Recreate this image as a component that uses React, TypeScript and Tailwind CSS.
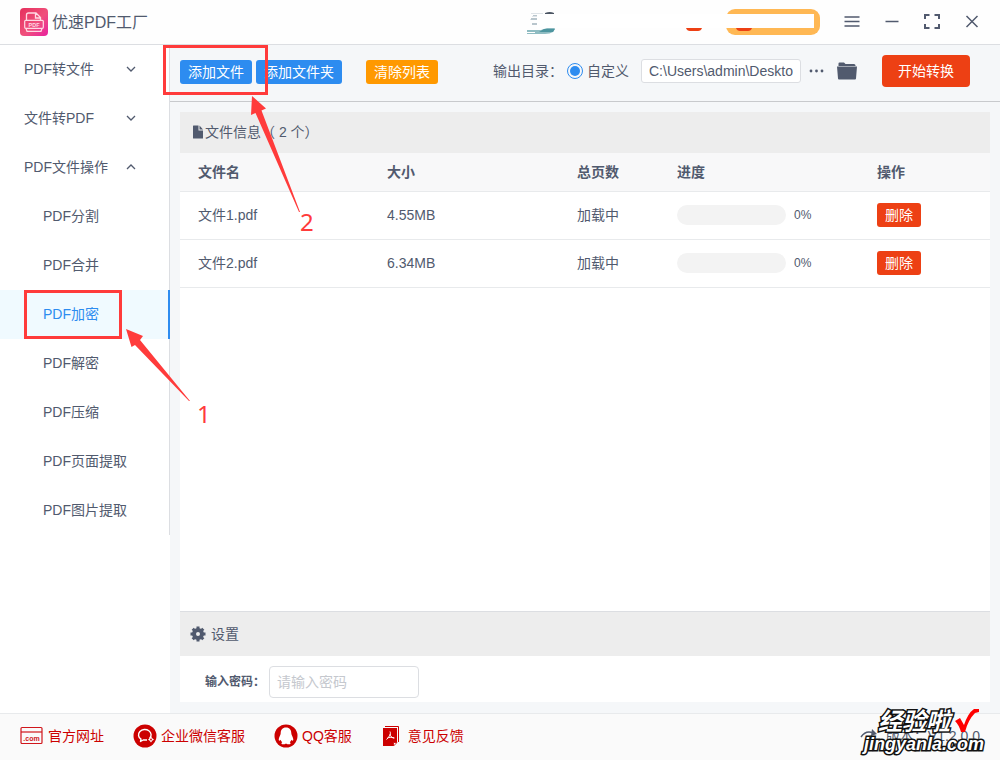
import { useState } from "react";

const operations = [
  "PDF分割",
  "PDF合并",
  "PDF加密",
  "PDF解密",
  "PDF压缩",
  "PDF页面提取",
  "PDF图片提取",
];

const files = [
  { name: "文件1.pdf", size: "4.55MB", pages: "加载中", progress: 0 },
  { name: "文件2.pdf", size: "6.34MB", pages: "加载中", progress: 0 },
];

const Logo = () => (
  <svg width="28" height="28" viewBox="0 0 28 28" fill="none">
    <defs>
      <linearGradient id="logo" x1="0" y1="0" x2="1" y2="1">
        <stop offset="0" stopColor="#e52f5c" />
        <stop offset="0.55" stopColor="#f0507c" />
        <stop offset="1" stopColor="#e8219f" />
      </linearGradient>
    </defs>
    <rect width="28" height="28" rx="4" fill="url(#logo)" />
    <path d="M6.500 12V7Q6.500 5 8.500 5H16L20.500 9.500V12M15.500 5V10H20.500" stroke="#ffd9e4" strokeWidth="1.300" />
    <rect x="4.700" y="12.300" width="18.600" height="8" rx="1" stroke="#ffd9e4" strokeWidth="1.200" />
    <path d="M6 20.500L7 23.300H21L22 20.500" stroke="#ffd9e4" strokeWidth="1.200" />
    <text x="14" y="18.600" fontSize="5.500" fontWeight="700" textAnchor="middle" fill="#ffd9e4">
      PDF
    </text>
  </svg>
);

const Banner = () => (
  <svg width="293" height="28" viewBox="0 0 293 28">
    <path d="M4 5H16V6H4ZM5 8H10V9H5ZM3 11H10V12H3Z" fill="#dfe4e8" />
    <path d="M18 5Q23 3 27 5V7H18Z" fill="#4b5563" />
    <path d="M6 7H10V8H6ZM4 10H10V12H4ZM5 15H10V17H5Z" fill="#b9c6cd" />
    <path d="M0 22H14L20 20H28L26 24Q23 26 18 26H0V25H8V24H0Z" fill="#8fbcc2" />
    <path d="M17 21H28L26 24H12Z" fill="#4d959f" />
    <path d="M159 20H175Q174 23 171 23H163Q160 23 159 20Z" fill="#ed4014" />
    <rect x="199" y="1" width="94" height="26" rx="9" fill="#ffb854" />
    <path d="M209 20H225Q224 23 221 23H213Q210 23 209 20Z" fill="#ed4014" />
    <rect x="10" y="6" width="277" height="14" fill="#fff" />
  </svg>
);

const Chevron = ({ up = false }: { up?: boolean }) => (
  <svg width="10" height="10" viewBox="0 0 10 10" fill="none" stroke="#515a6e" strokeWidth="1.300">
    <path d={up ? "M1 7L5 3L9 7" : "M1 3L5 7L9 3"} />
  </svg>
);

const WebIcon = () => (
  <svg width="24" height="24" viewBox="0 0 24 24" fill="none" stroke="#d0161b">
    <rect x="1" y="3.500" width="21" height="16" rx="1" strokeWidth="1.200" />
    <path d="M1 8H22" strokeWidth="1.200" />
    <text x="11.500" y="17" fontSize="7" fontWeight="700" textAnchor="middle" fill="#d0161b" stroke="none">
      .com
    </text>
  </svg>
);

const WechatIcon = () => (
  <svg width="24" height="24" viewBox="0 0 24 24" fill="none">
    <circle cx="12" cy="12" r="11.500" fill="#cc0000" />
    <path
      d="M16.500 14.500A6.300 5.400 0 1 0 8 15.200L7.500 17.500L10.200 16H14"
      stroke="#fff"
      strokeWidth="1.400"
      strokeLinejoin="round"
    />
    <path d="M18 12.500L19.200 14.200L21 15.500L19.200 16.700L18 18.500L16.700 16.700L15 15.500L16.700 14.200Z" fill="#fff" />
    <circle cx="18" cy="15.500" r="0.900" fill="#cc0000" />
  </svg>
);

const QQIcon = () => (
  <svg width="24" height="24" viewBox="0 0 24 24">
    <circle cx="12" cy="12" r="11.500" fill="#cc0000" />
    <path
      d="M12 3.500C8.300 3.500 6.700 6 6.700 9.200C6.700 11 4.700 13.300 4.700 15.500C4.700 17 5.700 17 6.700 15.700C7 17 7.700 17.800 8.200 18.200C6.700 19 7.200 20.300 9.500 20.300C11 20.300 11.500 20 12 19.600C12.500 20 13 20.300 14.500 20.300C16.800 20.300 17.300 19 15.800 18.200C16.300 17.800 17 17 17.300 15.700C18.300 17 19.300 17 19.300 15.500C19.300 13.300 17.300 11 17.300 9.200C17.300 6 15.700 3.500 12 3.500Z"
      fill="#fff"
    />
  </svg>
);

const FeedbackIcon = () => (
  <svg width="18" height="24" viewBox="0 0 18 24" fill="none">
    <path d="M3 2.500H16.500V18" stroke="#cc0000" strokeWidth="1" />
    <path d="M1 4H15V18L11 22H1Z" fill="#cc0000" />
    <path d="M11.500 22V18.500H15Z" fill="#fff" stroke="#cc0000" strokeWidth="0.800" />
    <path d="M8 7.500C9 9.500 8 12 4.500 15.500M8 10C8.500 12.500 10 14 12.500 14M5 14.500C7 13 9 13 12 14" stroke="#fff" />
  </svg>
);

const GearIcon = () => (
  <svg width="16" height="16" viewBox="0 0 16 16" fill="none" stroke="#515a6e">
    <circle cx="8" cy="8" r="4" strokeWidth="4" />
    <path
      d="M8 3V0.500M8 13V15.500M3 8H0.500M13 8H15.500M4.500 4.500L2.700 2.700M11.500 4.500L13.300 2.700M4.500 11.500L2.700 13.300M11.500 11.500L13.300 13.300"
      strokeWidth="3"
    />
  </svg>
);

const smallButton = "h-6 rounded-[3px] px-2 text-sm leading-6 text-white";

const App = () => {
  const [active, setActive] = useState<string>("PDF加密");

  return (
    <div className="relative flex min-h-screen flex-col overflow-hidden bg-white font-['Liberation_Sans','Noto_Sans_CJK_SC',sans-serif] text-sm text-[#515a6e]">
      <header className="flex h-[45px] items-center border-b border-[#dcdee2] bg-[#fefefe] pr-5 pl-5">
        <Logo />
        <h1 className="ml-1 pt-0.5 text-base">优速PDF工厂</h1>
        <div className="ml-auto flex items-center">
          <Banner />
          <div className="ml-6 flex items-center gap-6">
            <button aria-label="菜单">
              <svg width="16" height="16" viewBox="0 0 16 16" stroke="#515a6e" strokeWidth="1.500">
                <path d="M0.500 3H15.500M0.500 7.500H15.500M0.500 12H15.500" />
              </svg>
            </button>
            <button aria-label="最小化">
              <svg width="16" height="16" viewBox="0 0 16 16" stroke="#515a6e" strokeWidth="1.500">
                <path d="M1.500 7.500H14.500" />
              </svg>
            </button>
            <button aria-label="最大化">
              <svg width="16" height="16" viewBox="0 0 16 16" fill="none" stroke="#515a6e" strokeWidth="2">
                <path d="M1 5V1H5.500M10.500 1H15V5M15 10V14H10.500M5.500 14H1V10" />
              </svg>
            </button>
            <button aria-label="关闭">
              <svg width="16" height="16" viewBox="0 0 16 16" stroke="#515a6e" strokeWidth="1.500">
                <path d="M2.500 2L13.500 13M13.500 2L2.500 13" />
              </svg>
            </button>
          </div>
        </div>
      </header>

      <div className="flex flex-1">
        <aside className="w-[170px] shrink-0">
          <nav className="border-r border-[#dcdee2]">
            <button className="flex h-[49px] w-full items-center justify-between pr-[33px] pb-0.5 pl-6">
              PDF转文件
              <Chevron />
            </button>
            <button className="flex h-[49px] w-full items-center justify-between pr-[33px] pb-0.5 pl-6">
              文件转PDF
              <Chevron />
            </button>
            <button className="flex h-[49px] w-full items-center justify-between pr-[33px] pb-0.5 pl-6">
              PDF文件操作
              <Chevron up />
            </button>
            {operations.map((item) => (
              <button
                key={item}
                onClick={() => setActive(item)}
                className={
                  item === active
                    ? "-mr-px block h-[49px] w-[170px] border-r-2 border-[#2d8cf0] bg-[#f0faff] pb-0.5 pl-[43px] text-left text-[#2d8cf0]"
                    : "block h-[49px] w-full pb-0.5 pl-[43px] text-left"
                }
              >
                {item}
              </button>
            ))}
          </nav>
        </aside>

        <main className="flex min-w-0 flex-1 flex-col bg-[#f5f7f9]">
          <div className="flex h-[57px] items-center border-b border-[#c8cacd] pr-[30px] pb-1 pl-[10px]">
            <div className="flex pt-0.5">
              <button className={`${smallButton} bg-[#2d8cf0]`}>添加文件</button>
              <button className={`${smallButton} ml-1 bg-[#2d8cf0]`}>添加文件夹</button>
              <button className={`${smallButton} ml-6 bg-[#ff9900]`}>清除列表</button>
            </div>
            <div className="ml-auto flex items-center">
              <span>输出目录：</span>
              <label className="ml-1 flex items-center gap-1">
                <input
                  type="radio"
                  name="output"
                  defaultChecked
                  className="size-4 appearance-none rounded-full border border-[#2d8cf0] bg-white p-[2px] checked:bg-[#2d8cf0] checked:bg-clip-content"
                />
                自定义
              </label>
              <input
                aria-label="输出目录"
                defaultValue="C:\Users\admin\Deskto"
                className="ml-3 h-6 w-40 rounded-[3px] border border-[#dcdee2] bg-white px-[7px]"
              />
              <button aria-label="更多" className="ml-2">
                <svg width="16" height="16" viewBox="0 0 16 16" fill="#515a6e">
                  <circle cx="2" cy="8" r="1.400" />
                  <circle cx="7.500" cy="8" r="1.400" />
                  <circle cx="13" cy="8" r="1.400" />
                </svg>
              </button>
              <button aria-label="打开文件夹" className="ml-3">
                <svg width="20" height="18" viewBox="0 0 20 18" fill="#515a6e">
                  <path d="M1.500 4V1.500Q1.500 0.500 2.500 0.500H7L8.500 2H17Q18.500 2 18.500 3.500V4Z" />
                  <path d="M0 4.500H20L19 16.500Q19 17.500 18 17.500H2Q1 17.500 1 16.500Z" />
                </svg>
              </button>
              <button className="ml-[25px] h-8 rounded bg-[#ed4014] px-4 text-white">开始转换</button>
            </div>
          </div>

          <div className="flex flex-1 flex-col px-[10px] pt-[10px] pb-[11px]">
            <section className="flex flex-1 flex-col bg-white">
              <h2 className="flex h-[41px] items-center bg-[#ededed] pb-0.5 pl-3">
                <svg width="12" height="14" viewBox="0 0 12 14" fill="#515a6e">
                  <path d="M1.500 0.500H6.500V5.500H11V13Q11 13.500 10.500 13.500H1.500Q1 13.500 1 13V1Q1 0.500 1.500 0.500ZM7.500 0.500L11 4.500H7.500Z" />
                </svg>
                <span className="ml-px">文件信息（ 2 个）</span>
              </h2>
              <table className="w-full table-fixed text-left">
                <thead>
                  <tr className="h-[38px] border-b border-[#e8eaec] bg-[#f8f8f9]">
                    <th className="pl-[18px] font-bold">文件名</th>
                    <th className="w-[190px] pl-[17px] font-bold">大小</th>
                    <th className="w-[100px] pl-[17px] font-bold">总页数</th>
                    <th className="w-[200px] pl-[17px] font-bold">进度</th>
                    <th className="w-[130px] pl-[17px] font-bold">操作</th>
                  </tr>
                </thead>
                <tbody>
                  {files.map((file) => (
                    <tr key={file.name} className="h-12 border-b border-[#e8eaec]">
                      <td className="pl-[18px]">{file.name}</td>
                      <td className="pl-[17px]">{file.size}</td>
                      <td className="pl-[17px]">{file.pages}</td>
                      <td className="pl-[17px]">
                        <div className="flex items-center gap-2">
                          <div className="h-5 w-[109px] overflow-hidden rounded-full bg-[#f3f3f3]">
                            <div className="h-full bg-[#2d8cf0]" style={{ width: `${file.progress}%` }} />
                          </div>
                          <span className="text-xs">{file.progress}%</span>
                        </div>
                      </td>
                      <td className="pl-[17px]">
                        <button className={`${smallButton} bg-[#ed4014]`}>删除</button>
                      </td>
                    </tr>
                  ))}
                </tbody>
              </table>

              <div className="mt-auto">
                <h2 className="flex h-[45px] items-center gap-[5px] border-t border-[#dcdee2] bg-[#ededed] pl-[10px]">
                  <GearIcon />
                  设置
                </h2>
                <div className="flex h-[46px] items-center pt-[6px] pl-[25px]">
                  <label htmlFor="password" className="w-16 text-xs font-bold whitespace-nowrap">
                    输入密码：
                  </label>
                  <input
                    id="password"
                    placeholder="请输入密码"
                    className="h-8 w-[150px] rounded border border-[#dcdee2] px-[7px] placeholder:text-[#c5c8ce]"
                  />
                </div>
              </div>
            </section>
          </div>
        </main>
      </div>

      <footer className="flex h-[47px] items-center border-t border-[#e8eaec] bg-[#fafafa] pr-5 pb-0.5 pl-5 text-[#cc0000]">
        <a href="#" className="flex items-center gap-1">
          <WebIcon />
          官方网址
        </a>
        <a href="#" className="ml-[29px] flex items-center gap-1">
          <WechatIcon />
          企业微信客服
        </a>
        <a href="#" className="ml-[29px] flex items-center gap-1">
          <QQIcon />
          QQ客服
        </a>
        <a href="#" className="ml-[30px] flex items-center gap-2">
          <FeedbackIcon />
          意见反馈
        </a>
        <span className="ml-auto flex items-center gap-2 text-[#515a6e]">
          <svg width="18" height="14" viewBox="0 0 18 14" fill="none" stroke="#515a6e" strokeWidth="1.500">
            <path d="M1 8Q6 1 13 4" />
            <path d="M12 0L17 5L11 7Z" fill="#515a6e" stroke="none" />
          </svg>
          版本：V1.2.0.0
        </span>
      </footer>

      {/* step markers over the window */}
      <div className="pointer-events-none absolute top-[45px] left-[163px] h-[50px] w-[105px] border-3 border-[#ff3b3b]" />
      <div className="pointer-events-none absolute top-[290px] left-[24px] h-[49px] w-[98px] border-3 border-[#ff3b3b]" />
      <svg className="pointer-events-none absolute top-[96px] left-[250px]" width="52" height="118" viewBox="0 0 52 118" fill="#ff3b3b">
        <path d="M2 0L16 12.500L11.500 14.500L50 116H49L5.500 17L1 19Z" />
      </svg>
      <svg className="pointer-events-none absolute top-[328px] left-[125px]" width="66" height="75" viewBox="0 0 66 75" fill="#ff3b3b">
        <path d="M1 1L18 8L15 12L65 73H64L10 17L6.500 19Z" />
      </svg>
      <span className="pointer-events-none absolute top-[210px] left-[300px] font-['Noto_Sans','Noto_Sans_CJK_SC',sans-serif] text-2xl leading-6 text-[#ff3b3b]">2</span>
      <span className="pointer-events-none absolute top-[402px] left-[197px] font-['Noto_Sans','Noto_Sans_CJK_SC',sans-serif] text-2xl leading-6 text-[#ff3b3b]">1</span>

      {/* watermark */}
      <div className="pointer-events-none absolute right-4 bottom-[6px] text-right font-bold text-white italic [paint-order:stroke_fill] [-webkit-text-stroke:3px_#111]">
        <div className="flex items-end justify-end gap-1 pr-1">
          <span className="text-2xl leading-6">经验啦</span>
          <svg width="26" height="26" viewBox="0 0 26 26" fill="#ff0000">
            <path d="M1 13L6 10L10 17Q14 5 20 1H25V4L21 5Q14 12 11 24H7Q5 17 1 13Z" />
          </svg>
        </div>
        <div className="text-lg leading-5">jingyanla.com</div>
      </div>
    </div>
  );
};

export default App;
